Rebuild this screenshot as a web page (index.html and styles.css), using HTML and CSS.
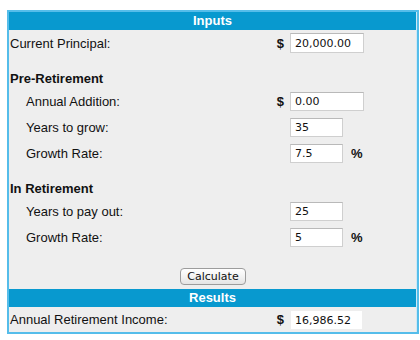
FILE: index.html
```html
<!DOCTYPE html>
<html>
<head>
<meta charset="utf-8">
<link rel="stylesheet" href="styles.css">
</head>
<body>
<div class="calc">
  <div class="bar">Inputs</div>
  <div class="row">
    <div class="label">Current Principal:</div>
    <div class="cur">$</div>
    <div class="field"><input class="inp wide tall" value="20,000.00"></div>
  </div>
  <div class="heading gap">Pre-Retirement</div>
  <div class="row">
    <div class="label indent">Annual Addition:</div>
    <div class="cur">$</div>
    <div class="field"><input class="inp wide" value="0.00"></div>
  </div>
  <div class="row">
    <div class="label indent">Years to grow:</div>
    <div class="cur"></div>
    <div class="field"><input class="inp narrow" value="35"></div>
  </div>
  <div class="row">
    <div class="label indent">Growth Rate:</div>
    <div class="cur"></div>
    <div class="field"><input class="inp narrow" value="7.5"><span class="unit">%</span></div>
  </div>
  <div class="heading gap">In Retirement</div>
  <div class="row">
    <div class="label indent">Years to pay out:</div>
    <div class="cur"></div>
    <div class="field"><input class="inp narrow" value="25"></div>
  </div>
  <div class="row">
    <div class="label indent">Growth Rate:</div>
    <div class="cur"></div>
    <div class="field"><input class="inp narrow" value="5"><span class="unit">%</span></div>
  </div>
  <div class="actions"><button class="btn">Calculate</button></div>
  <div class="bar">Results</div>
  <div class="row result">
    <div class="label">Annual Retirement Income:</div>
    <div class="cur">$</div>
    <div class="field"><input class="inp out" value="16,986.52" readonly></div>
  </div>
</div>
</body>
</html>
```

FILE: styles.css
```css
html, body {
  margin: 0;
  padding: 0;
  background: #ffffff;
}

body {
  font-family: "Liberation Sans", Arial, sans-serif;
  font-size: 13px;
  color: #111111;
}

.calc {
  margin: 10px 0 0 7px;
  width: 408px;
  border: 2px solid #55bdea;
  background: #eeeeee;
  box-shadow: inset -1px 0 0 #cfe9f5;
}

.bar {
  height: 18px;
  line-height: 18px;
  background: #0899cf;
  color: #ffffff;
  font-weight: bold;
  text-align: center;
  margin-right: 1px;
}

.row {
  display: grid;
  grid-template-columns: 1fr 20px 127px;
  align-items: center;
  height: 26px;
}

.label {
  padding-left: 1px;
}

.label.indent {
  padding-left: 17px;
}

.cur {
  font-weight: bold;
  text-align: right;
  padding-right: 6px;
}

.field {
  display: flex;
  align-items: center;
}

.heading {
  height: 18px;
  line-height: 18px;
  font-weight: bold;
  padding-left: 1px;
}

.heading.gap {
  margin-top: 14px;
}

.inp {
  box-sizing: border-box;
  height: 19px;
  margin: 0;
  padding: 1px 0 0 4px;
  border: 1px solid #cfcfcf;
  border-top-color: #b9b9b9;
  background: #ffffff;
  font-family: "DejaVu Sans", "Lucida Grande", sans-serif;
  font-size: 11px;
  color: #111111;
  outline: none;
}

.inp.tall {
  height: 20px;
}

.inp.wide {
  width: 74px;
}

.inp.narrow {
  width: 53px;
}

.inp.out {
  width: 71px;
  height: 18px;
  border: none;
  margin-left: 1px;
  padding-left: 4px;
}

.unit {
  font-weight: bold;
  margin-left: 8px;
}

.actions {
  display: flex;
  justify-content: center;
  padding: 18px 0 4px;
}

.btn {
  box-sizing: border-box;
  width: 66px;
  height: 17px;
  margin: 0;
  padding: 0;
  border: 1px solid #9c9c9c;
  border-radius: 4px;
  background: linear-gradient(#ffffff, #f3f3f3 50%, #e4e4e4);
  font-family: "DejaVu Sans", "Lucida Grande", sans-serif;
  font-size: 11px;
  color: #111111;
  line-height: 15px;
}

.row.result {
  height: 25px;
}
```
